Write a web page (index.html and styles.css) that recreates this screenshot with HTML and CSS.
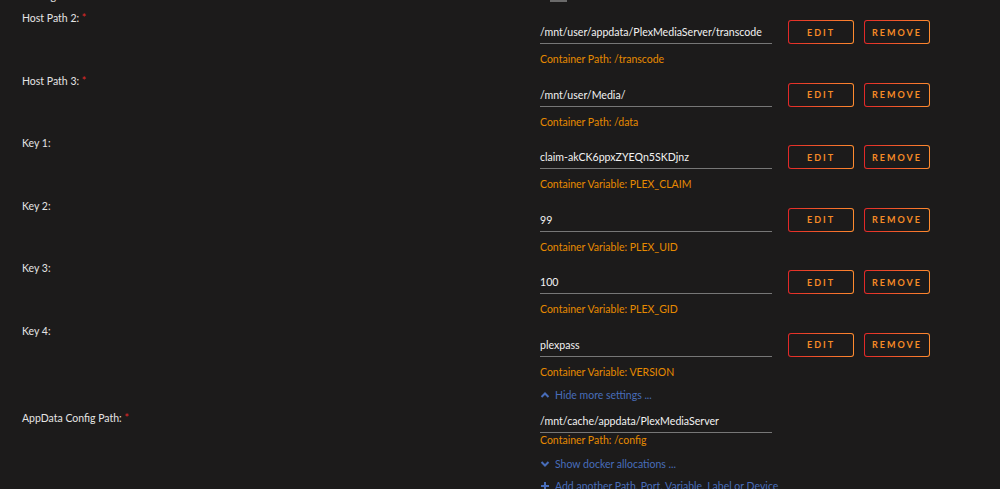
FILE: index.html
```html
<!DOCTYPE html>
<html lang="en">
<head>
    <meta charset="UTF-8">
    <meta name="viewport" content="width=device-width, initial-scale=1.0">
    <title>Add Container</title>
    <link rel="stylesheet" href="styles.css">
</head>
<body>
    <div class="stub">
        <span class="stub-label">Privileged:</span>
        <span class="stub-switch"></span>
    </div>

    <div class="row">
        <div class="label">Host Path 2: <span class="req">*</span></div>
        <div class="field">
            <div class="input">/mnt/user/appdata/PlexMediaServer/transcode</div>
            <div class="hint">Container Path: /transcode</div>
        </div>
        <div class="actions">
            <button class="btn">EDIT</button>
            <button class="btn">REMOVE</button>
        </div>
    </div>
    <div class="row">
        <div class="label">Host Path 3: <span class="req">*</span></div>
        <div class="field">
            <div class="input">/mnt/user/Media/</div>
            <div class="hint">Container Path: /data</div>
        </div>
        <div class="actions">
            <button class="btn">EDIT</button>
            <button class="btn">REMOVE</button>
        </div>
    </div>
    <div class="row">
        <div class="label">Key 1:</div>
        <div class="field">
            <div class="input">claim-akCK6ppxZYEQn5SKDjnz</div>
            <div class="hint">Container Variable: PLEX_CLAIM</div>
        </div>
        <div class="actions">
            <button class="btn">EDIT</button>
            <button class="btn">REMOVE</button>
        </div>
    </div>
    <div class="row">
        <div class="label">Key 2:</div>
        <div class="field">
            <div class="input">99</div>
            <div class="hint">Container Variable: PLEX_UID</div>
        </div>
        <div class="actions">
            <button class="btn">EDIT</button>
            <button class="btn">REMOVE</button>
        </div>
    </div>
    <div class="row">
        <div class="label">Key 3:</div>
        <div class="field">
            <div class="input">100</div>
            <div class="hint">Container Variable: PLEX_GID</div>
        </div>
        <div class="actions">
            <button class="btn">EDIT</button>
            <button class="btn">REMOVE</button>
        </div>
    </div>
    <div class="row">
        <div class="label">Key 4:</div>
        <div class="field">
            <div class="input">plexpass</div>
            <div class="hint">Container Variable: VERSION</div>
        </div>
        <div class="actions">
            <button class="btn">EDIT</button>
            <button class="btn">REMOVE</button>
        </div>
    </div>

    <div class="link-row first">
        <a class="link" href="#">
            <svg width="10" height="8" viewBox="0 0 10 8"><polyline points="1.5,6 5,2.5 8.5,6" fill="none" stroke="#486dba" stroke-width="2"/></svg>
            Hide more settings ...
        </a>
    </div>

    <div class="row short">
        <div class="label">AppData Config Path: <span class="req">*</span></div>
        <div class="field">
            <div class="input">/mnt/cache/appdata/PlexMediaServer</div>
            <div class="hint">Container Path: /config</div>
        </div>
    </div>

    <div class="link-row second">
        <a class="link" href="#">
            <svg width="10" height="8" viewBox="0 0 10 8"><polyline points="1.5,2 5,5.5 8.5,2" fill="none" stroke="#486dba" stroke-width="2"/></svg>
            Show docker allocations ...
        </a>
    </div>
    <div class="link-row">
        <a class="link" href="#">
            <svg width="10" height="10" viewBox="0 0 10 10"><path d="M5 1v8M1 5h8" fill="none" stroke="#486dba" stroke-width="2"/></svg>
            Add another Path, Port, Variable, Label or Device
        </a>
    </div>
</body>
</html>
```

FILE: styles.css
```css
body {
    margin: 0;
    padding: 0 0 0 22px;
    background-color: #1c1b1b;
    color: #e4e4e4;
    font-family: Lato, "Open Sans", sans-serif;
    font-size: 10.5px;
    overflow: hidden;
}
.stub {
    display: flex;
    height: 3px;
    overflow: hidden;
}
.stub-label {
    width: 528px;
    margin-top: -12px;
    line-height: 16px;
}
.stub-switch {
    width: 17px;
    height: 2px;
    background: #6a6a6a;
}
.row {
    display: flex;
    height: 62.5px;
    padding-top: 5px;
    box-sizing: border-box;
}
.label {
    width: 518px;
    line-height: 20px;
}
.req {
    color: #e22828;
}
.field {
    width: 232px;
    padding-top: 14px;
}
.input {
    line-height: 21px;
    font-size: 10.6px;
    color: #f2f2f2;
    border-bottom: 1px solid #777;
}
.hint {
    margin-top: 7px;
    line-height: 16px;
    color: #e68a00;
}
.actions {
    display: flex;
    gap: 10px;
    margin-left: 16px;
    padding-top: 12px;
}
.btn {
    width: 66px;
    height: 24px;
    padding: 0;
    border: 1px solid transparent;
    border-radius: 3px;
    background:
        linear-gradient(#1c1b1b, #1c1b1b) padding-box,
        linear-gradient(90deg, #e22828, #ff8c2f) border-box;
    color: #f58a26;
    font-family: inherit;
    font-size: 9px;
    font-weight: bold;
    letter-spacing: 2px;
    cursor: pointer;
}
.link-row {
    padding-left: 518px;
    line-height: 22px;
}
.link-row.first {
    margin-top: 6px;
}
.link-row.second {
    margin-top: 5px;
}
.link {
    color: #486dba;
    text-decoration: none;
    display: inline-flex;
    align-items: center;
    gap: 5px;
}
.row.short {
    height: auto;
    padding-top: 0;
    margin-top: 2px;
}
.row.short .field {
    padding-top: 2px;
}
.row.short .input {
    line-height: 22px;
}
.row.short .hint {
    margin-top: -1px;
}
```
